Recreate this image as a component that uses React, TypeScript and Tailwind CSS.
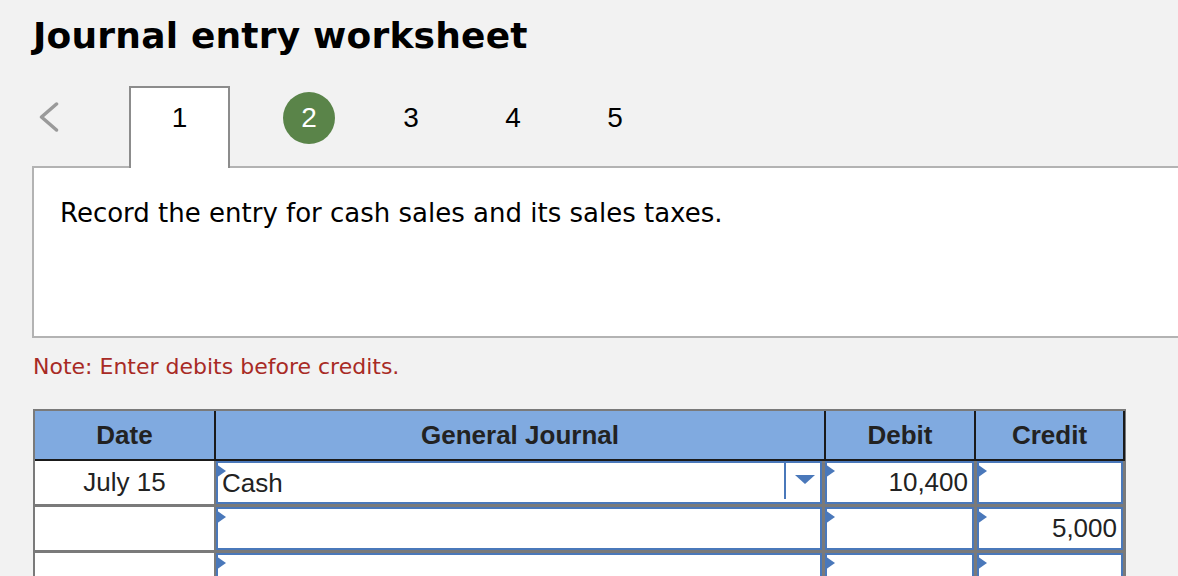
import { ReactNode } from "react";

const SANS = "font-['Liberation_Sans',Arial,sans-serif]";
const VERD = "font-['DejaVu_Sans',Verdana,sans-serif]";

type Row = {
  date: string;
  account: string;
  debit: string;
  credit: string;
  select?: boolean;
};

const ROWS: Row[] = [
  { date: "July 15", account: "Cash", debit: "10,400", credit: "", select: true },
  { date: "", account: "", debit: "", credit: "5,000" },
  { date: "", account: "", debit: "", credit: "" },
  { date: "", account: "", debit: "", credit: "" },
];

function Flag() {
  return (
    <svg className="absolute -left-[2px] top-px" width="10" height="14" viewBox="0 0 10 14">
      <polygon points="0,0 10,7 0,14" fill="#4a78ba" />
    </svg>
  );
}

function Field({ width, children, right }: { width: string; children?: ReactNode; right?: boolean }) {
  return (
    <div
      className={`relative flex h-[43px] items-center border-2 border-[#4a78ba] bg-white px-[4px] text-[26px] text-[#222] ${width} ${
        right ? "justify-end" : ""
      }`}
    >
      <Flag />
      {children}
    </div>
  );
}

export default function App() {
  return (
    <div className="h-screen overflow-hidden bg-[#f2f2f2] pl-[33px] pt-[14px]">
      <h1 className={`${VERD} text-[36px] font-bold leading-[44px] tracking-[0.2px] text-black`}>
        Journal entry worksheet
      </h1>

      {/* step tabs */}
      <div className={`${SANS} relative z-10 mt-[28px] flex h-[82px] text-[28px] leading-[32px] text-black`}>
        <div className="w-[96px] pl-[6px] pt-[16px]">
          <svg width="20" height="30" viewBox="0 0 20 30">
            <polyline
              points="17.5,2 2.5,15 17.5,28"
              fill="none"
              stroke="#9a9a9a"
              strokeWidth="3.5"
              strokeLinecap="round"
              strokeLinejoin="round"
            />
          </svg>
        </div>
        <div className="h-[82px] w-[101px] border-2 border-b-0 border-[#8c8c8c] bg-white pt-[14px] text-center">1</div>
        <div className="ml-[28px] flex w-[102px] justify-center pt-[6px]">
          <div className="h-[52px] w-[52px] rounded-full bg-[#5a8449] pt-[10px] text-center text-white">2</div>
        </div>
        {["3", "4", "5"].map((n) => (
          <div key={n} className="w-[102px] pt-[16px] text-center">
            {n}
          </div>
        ))}
      </div>

      <div className={`${VERD} -ml-px -mt-[2px] h-[172px] w-[1180px] border-2 border-[#b3b3b3] bg-white px-[26px] pt-[29px] text-[26px] leading-[32px] text-black`}>
        Record the entry for cash sales and its sales taxes.
      </div>

      <p className={`${VERD} mt-[15px] text-[22px] leading-[28px] text-[#a82a25]`}>Note: Enter debits before credits.</p>

      {/* journal table */}
      <div className={`${SANS} mt-[28px] w-[1093px]`}>
        <div className="flex bg-[#7a7a7a] pl-[2px] pr-px pt-[2px] text-[26px] font-bold text-[#222]">
          {[
            ["Date", "w-[181px]"],
            ["General Journal", "w-[610px]"],
            ["Debit", "w-[150px]"],
            ["Credit", "w-[149px]"],
          ].map(([label, w]) => (
            <div
              key={label}
              className={`flex h-[50px] items-center justify-center border-b-2 border-r-2 border-[#1a1a1a] bg-[#80aae0] ${w}`}
            >
              {label}
            </div>
          ))}
        </div>
        {ROWS.map((r, i) => (
          <div key={i} className="flex bg-[#7a7a7a] pb-[3px] pl-[2px] pr-[3px]">
            <div className="flex h-[43px] w-[179px] items-center justify-center bg-white text-[26px] text-[#222]">{r.date}</div>
            <div className="ml-[2px]">
              <Field width="w-[606px]">
                <span className="flex-1 pt-px">{r.account}</span>
                {r.select && (
                  <>
                    <div className="mr-[9px] h-[36px] w-[2px] self-start bg-[#4a78ba]" />
                    <svg className="mb-[6px] mr-px" width="20" height="9" viewBox="0 0 20 9">
                      <polygon points="0,0 20,0 10,9" fill="#4a78ba" />
                    </svg>
                  </>
                )}
              </Field>
            </div>
            <div className="ml-[3px]">
              <Field width="w-[149px]" right>
                {r.debit}
              </Field>
            </div>
            <div className="ml-[3px]">
              <Field width="w-[146px]" right>
                {r.credit}
              </Field>
            </div>
          </div>
        ))}
      </div>
    </div>
  );
}
